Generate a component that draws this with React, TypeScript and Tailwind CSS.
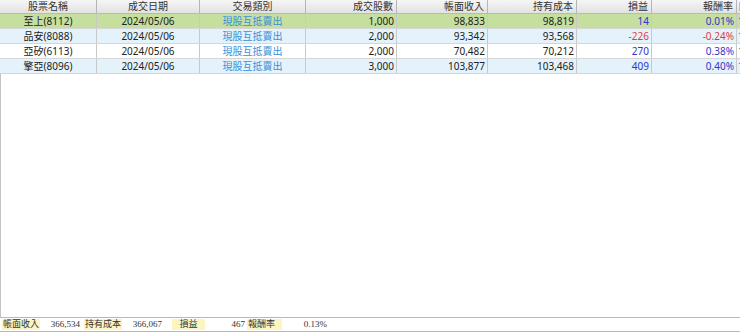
const cols = [
  { key: "name", label: "股票名稱", w: "w-[97px]", align: "text-center" },
  { key: "date", label: "成交日期", w: "w-[103px]", align: "text-center" },
  { key: "type", label: "交易類別", w: "w-[106px]", align: "text-center" },
  { key: "qty", label: "成交股數", w: "w-[91px]", align: "text-right" },
  { key: "income", label: "帳面收入", w: "w-[91px]", align: "text-right" },
  { key: "cost", label: "持有成本", w: "w-[89px]", align: "text-right" },
  { key: "pl", label: "損益", w: "w-[75px]", align: "text-right" },
  { key: "rate", label: "報酬率", w: "w-[85px]", align: "text-right" },
];

const rows = [
  { name: "至上(8112)", date: "2024/05/06", type: "現股互抵賣出", qty: "1,000", income: "98,833", cost: "98,819", pl: "14", rate: "0.01%", neg: false, bg: "bg-[#c5df9e]" },
  { name: "品安(8088)", date: "2024/05/06", type: "現股互抵賣出", qty: "2,000", income: "93,342", cost: "93,568", pl: "-226", rate: "-0.24%", neg: true, bg: "bg-[#e4f2fc]" },
  { name: "亞矽(6113)", date: "2024/05/06", type: "現股互抵賣出", qty: "2,000", income: "70,482", cost: "70,212", pl: "270", rate: "0.38%", neg: false, bg: "bg-white" },
  { name: "擎亞(8096)", date: "2024/05/06", type: "現股互抵賣出", qty: "3,000", income: "103,877", cost: "103,468", pl: "409", rate: "0.40%", neg: false, bg: "bg-[#e4f2fc]" },
];

// label box / value box widths and the gap before each pair, read off the footer
const summary = [
  { label: "帳面收入", value: "366,534", ml: "ml-[2px]", lw: "w-[38px]", vw: "w-[40px]", align: "text-left" },
  { label: "持有成本", value: "366,067", ml: "ml-[4px]", lw: "w-[38px]", vw: "w-[40px]", align: "text-left" },
  { label: "損益", value: "467", ml: "ml-[10px]", lw: "w-[33px]", vw: "w-[40px]", align: "text-center" },
  { label: "報酬率", value: "0.13%", ml: "ml-[2px]", lw: "w-[35px]", vw: "w-[45px]", align: "text-left" },
];

function cellColor(key: string, neg: boolean) {
  if (key === "type") return "text-[#3b8fd9]";
  if (key === "pl" || key === "rate") return neg ? "text-[#e23b3b]" : "text-[#3434c8]";
  return "text-[#222]";
}

export default function App() {
  return (
    <div
      className="flex h-[334px] w-[740px] flex-col overflow-hidden bg-white text-[10px] leading-none"
      style={{ fontFamily: '"Noto Sans", "Noto Sans CJK TC", sans-serif' }}
    >
      <div className="flex flex-1 flex-col">
        {/* header */}
        <div className="flex h-[14px] border-b border-[#b9b9b9] bg-gradient-to-b from-[#f6f6f6] to-[#e2e2e2]">
          {cols.map((c) => (
            <div
              key={c.key}
              className={`${c.w} ${c.align} flex-none whitespace-nowrap border-r border-[#b5b5b5] px-[3px] pt-[1px] text-[#333]`}
            >
              {c.label}
            </div>
          ))}
          <div className="min-w-0 flex-1 overflow-hidden whitespace-nowrap pl-[1px] pt-[1px] text-[#333]">日</div>
        </div>

        {rows.map((r) => (
          <div key={r.name} className={`flex h-[15px] border-b border-[#d6d6d6] ${r.bg}`}>
            {cols.map((c) => (
              <div
                key={c.key}
                className={`${c.w} ${c.align} ${cellColor(c.key, r.neg)} flex-none whitespace-nowrap border-r border-[#c9c9c9] px-[2px] pt-[2px]`}
              >
                {(r as Record<string, unknown>)[c.key] as string}
              </div>
            ))}
            <div className="min-w-0 flex-1 overflow-hidden pl-[1px] pt-[2px] text-[#555]">1</div>
          </div>
        ))}
        <div className="flex-1 border-l border-[#c4c4c4]" />
      </div>

      {/* summary */}
      <div
        className="flex h-[15px] items-center border-y border-[#b8b8b8] text-[9px] text-[#333]"
        style={{ fontFamily: '"Liberation Serif", "Noto Sans CJK TC", serif' }}
      >
        {summary.map((s) => (
          <div key={s.label} className={`flex items-center whitespace-nowrap ${s.ml}`}>
            <div className={`${s.lw} ${s.align} overflow-hidden bg-[#fcf5c2] px-[1px] py-[1px]`}>{s.label}</div>
            <div className={`${s.vw} text-right`}>{s.value}</div>
          </div>
        ))}
      </div>
      <div className="h-[2px]" />
    </div>
  );
}
